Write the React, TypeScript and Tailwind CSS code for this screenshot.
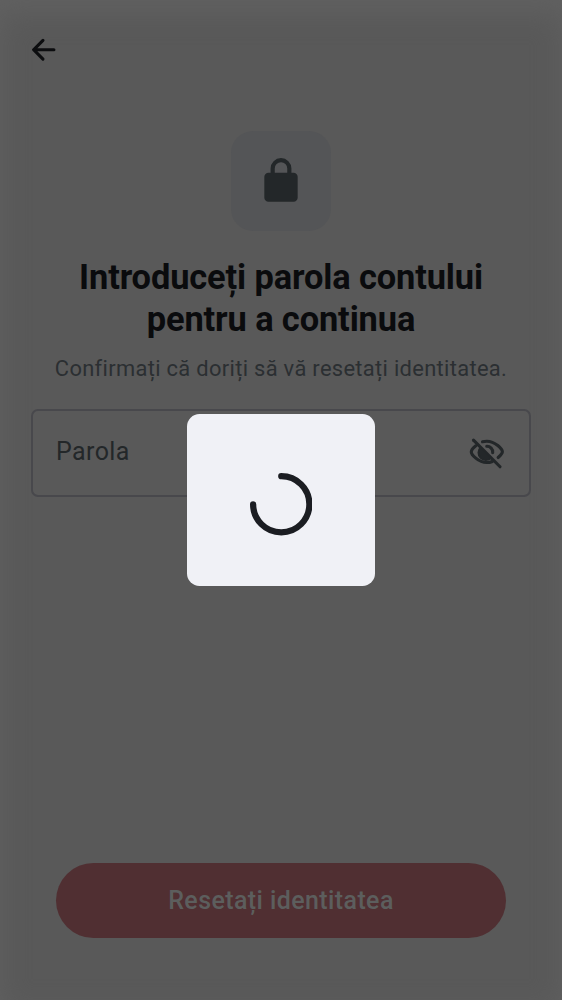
function BackIcon() {
  return (
    <svg viewBox="0 0 24 24" className="size-[37.5px]" fill="#0c0d0f">
      <path d="M12.207 5.293a1 1 0 0 1 0 1.414L7.914 11H18.5a1 1 0 1 1 0 2H7.914l4.293 4.293a1 1 0 0 1-1.414 1.414l-6-6a1 1 0 0 1 0-1.414l6-6a1 1 0 0 1 1.414 0Z" />
    </svg>
  );
}

function LockIcon() {
  return (
    <svg viewBox="0 0 24 24" className="size-[50px]" fill="#232729">
      <path d="M6 22q-.824 0-1.412-.587A1.93 1.93 0 0 1 4 20V10q0-.825.588-1.412A1.93 1.93 0 0 1 6 8h1V6q0-2.075 1.463-3.537Q9.926 1 12 1t3.537 1.463T17 6v2h1q.824 0 1.413.588Q20 9.175 20 10v10q0 .824-.587 1.413A1.93 1.93 0 0 1 18 22zM9 8h6V6q0-1.25-.875-2.125A2.9 2.9 0 0 0 12 3q-1.25 0-2.125.875A2.9 2.9 0 0 0 9 6z" />
    </svg>
  );
}

function HiddenIcon() {
  return (
    <svg
      viewBox="0 0 24 24"
      className="size-[37.5px]"
      fill="none"
      stroke="#232729"
      strokeWidth="2"
      strokeLinecap="round"
      strokeLinejoin="round"
    >
      <path d="M3.5 4.6 20.5 21.6" />
      <path d="M5 8.2C3.1 9.7 2.1 11.3 2.1 12.1c0 1.5 4.4 6.8 9.9 6.8 1.3 0 2.5-.25 3.6-.7" />
      <path d="M9.3 5.6c.9-.25 1.8-.35 2.7-.35 5.5 0 10 5.2 10 6.75 0 .7-1 2.2-2.7 3.7" />
      <path d="M12 8.5a3.7 3.7 0 0 1 3.8 4.1" />
      <path
        d="M8 9.1 14.9 16A4.7 4.7 0 0 1 8 9.1Z"
        fill="#232729"
        strokeWidth="1"
      />
    </svg>
  );
}

function Spinner() {
  return (
    <svg
      viewBox="0 0 62.5 62.5"
      className="size-[62.5px]"
      fill="none"
      stroke="#1b1d22"
      strokeWidth="6.25"
      strokeLinecap="round"
    >
      <path d="M31.25 3.125A28.125 28.125 0 1 1 3.125 31.25" />
    </svg>
  );
}

export default function App() {
  return (
    <div className="relative flex h-[1000px] w-[562px] flex-col overflow-hidden bg-[#595959] font-['Roboto',sans-serif] shadow-[inset_0_12px_28px_0_#616161]">
      <header className="flex h-[100px] items-center pl-[25px]">
        <button aria-label="Înapoi">
          <BackIcon />
        </button>
      </header>
      <main className="flex flex-1 flex-col items-center px-[31px] pt-[31px]">
        <div className="flex size-[100px] items-center justify-center rounded-[22px] bg-[#545557]">
          <LockIcon />
        </div>
        <h1 className="mt-[25px] text-center text-[34.4px] leading-[42.2px] font-bold tracking-[-0.12px] text-[#0a0b0d]">
          Introduceți parola contului
          <br />
          pentru a continua
        </h1>
        <p className="mt-[13px] text-[21.9px] leading-[31px] tracking-[0.32px] whitespace-nowrap text-[#2b2f32]">
          Confirmați că doriți să vă resetați identitatea.
        </p>
        <div className="mt-[25px] flex h-[88px] w-[500px] items-center justify-between rounded-[7px] border-2 border-[#48484c] pr-[24px] pb-[3px] pl-[23px]">
          <span className="text-[25px] tracking-[0.4px] text-[#232729]">Parola</span>
          <HiddenIcon />
        </div>
      </main>
      <footer className="px-[56px] pb-[62.5px]">
        <button className="flex h-[75px] w-full items-center justify-center rounded-full bg-[#502f32] pt-px text-[25px] font-medium tracking-[0.4px] text-[#5c5e5d]">
          Resetați identitatea
        </button>
      </footer>
      <div role="dialog" className="absolute inset-0 flex items-center justify-center">
        <div className="flex h-[172px] w-[187.5px] items-center justify-center rounded-[12.5px] bg-[#f0f1f6] pt-[9px]">
          <Spinner />
        </div>
      </div>
    </div>
  );
}
